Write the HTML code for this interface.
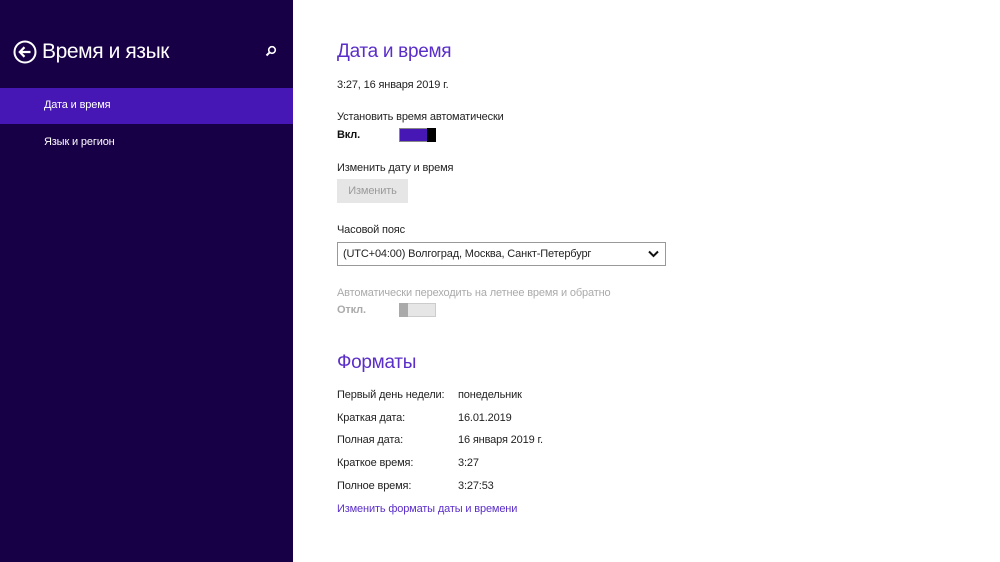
<!DOCTYPE html>
<html><head><meta charset="utf-8"><style>
*{margin:0;padding:0;box-sizing:border-box}
body{width:1000px;height:562px;overflow:hidden;background:#fff;font-family:"Liberation Sans",sans-serif;position:relative;color:#222;font-size:11px;letter-spacing:-0.15px}
.side{position:absolute;left:0;top:0;width:293px;height:562px;background:#180047;color:#fff}
.a{position:absolute;white-space:nowrap}
h1{font-weight:normal;font-size:21px;color:#fff;letter-spacing:-0.4px}
h2{font-weight:normal;font-size:19px;color:#5a2ec8;letter-spacing:-0.3px}
.sel{position:absolute;left:0;top:88px;width:293px;height:36px;background:#4617b4}
</style></head><body>
<div class="side">
<svg class="a" style="left:13px;top:40px" width="24" height="24" viewBox="0 0 24 24"><circle cx="12" cy="12" r="10.5" fill="none" stroke="#fff" stroke-width="2"/><path d="M17.5 12H7M11.5 7.2L6.8 12l4.7 4.8" fill="none" stroke="#fff" stroke-width="2.2"/></svg>
<h1 class="a" style="left:42px;top:40px">Время и язык</h1>
<svg class="a" style="left:265px;top:45px" width="12" height="12" viewBox="0 0 12 12"><circle cx="7" cy="5" r="3.3" fill="none" stroke="#fff" stroke-width="1.6"/><path d="M4.6 7.4L1.5 10.5" stroke="#fff" stroke-width="2"/></svg>
<div class="sel"></div>
<div class="a" style="left:44px;top:99px">Дата и время</div>
<div class="a" style="left:44px;top:136px">Язык и регион</div>
</div>
<h2 class="a" style="left:337px;top:41px">Дата и время</h2>
<div class="a" style="left:337px;top:79px">3:27, 16 января 2019 г.</div>
<div class="a" style="left:337px;top:111px">Установить время автоматически</div>
<div class="a" style="left:337px;top:129px;font-weight:bold;color:#111">Вкл.</div>
<div class="a" style="left:399px;top:128px;width:37px;height:14px;border:1px solid #888;background:#4617b4"></div>
<div class="a" style="left:427px;top:128px;width:9px;height:14px;background:#000"></div>
<div class="a" style="left:337px;top:162px">Изменить дату и время</div>
<div class="a" style="left:337px;top:179px;width:71px;height:24px;background:#e6e6e6;color:#9a9a9a;text-align:center;line-height:24px">Изменить</div>
<div class="a" style="left:337px;top:224px">Часовой пояс</div>
<div class="a" style="left:337px;top:242px;width:329px;height:24px;border:1px solid #999;line-height:22px;padding-left:5px">(UTC+04:00) Волгоград, Москва, Санкт-Петербург</div>
<svg class="a" style="left:648px;top:250px" width="11" height="8" viewBox="0 0 11 8"><path d="M1 1.5l4.5 4.5 4.5-4.5" fill="none" stroke="#111" stroke-width="2"/></svg>
<div class="a" style="left:337px;top:287px;color:#aaa">Автоматически переходить на летнее время и обратно</div>
<div class="a" style="left:337px;top:304px;color:#aaa;font-weight:bold">Откл.</div>
<div class="a" style="left:399px;top:303px;width:37px;height:14px;border:1px solid #ccc;background:#e6e6e6"></div>
<div class="a" style="left:399px;top:303px;width:9px;height:14px;background:#aaa"></div>
<h2 class="a" style="left:337px;top:352px">Форматы</h2>
<div class="a" style="left:337px;top:389px">Первый день недели:</div><div class="a" style="left:458px;top:389px">понедельник</div>
<div class="a" style="left:337px;top:412px">Краткая дата:</div><div class="a" style="left:458px;top:412px">16.01.2019</div>
<div class="a" style="left:337px;top:434px">Полная дата:</div><div class="a" style="left:458px;top:434px">16 января 2019 г.</div>
<div class="a" style="left:337px;top:457px">Краткое время:</div><div class="a" style="left:458px;top:457px">3:27</div>
<div class="a" style="left:337px;top:480px">Полное время:</div><div class="a" style="left:458px;top:480px">3:27:53</div>
<div class="a" style="left:337px;top:503px;color:#5a2ec8">Изменить форматы даты и времени</div>
</body></html>
